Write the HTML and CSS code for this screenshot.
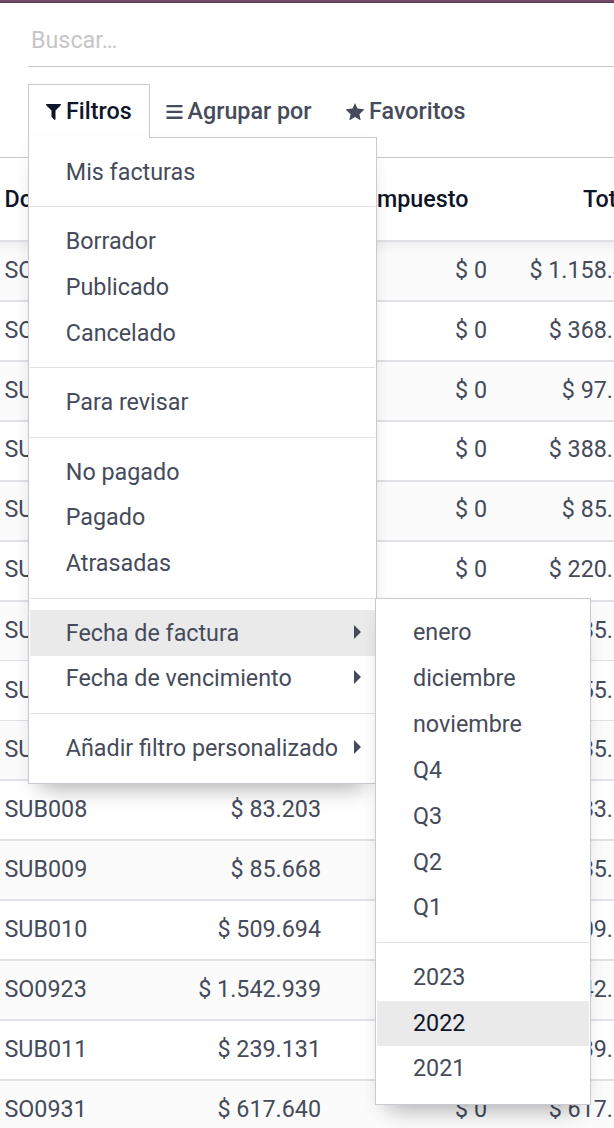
FILE: index.html
```html
<!DOCTYPE html>
<html lang="es">
<head>
<meta charset="utf-8">
<title>Facturas</title>
<link rel="stylesheet" href="styles.css">
</head>
<body>
<div class="app">
  <div class="navbar"></div>
  <header class="control-panel">
    <div class="search">Buscar…</div>
    <nav class="toolbar">
      <div class="tool tool-open">
        <svg class="icon icon-filter" viewBox="0 0 15 16"><path d="M.7 0h13.6c.6 0 .9.7.5 1.200L9.500 6.500v8.600c0 .7-.7 1-1.200.6L5.800 13.200c-.2-.2-.3-.4-.3-.6V6.500L.2 1.200C-.2.700.1 0 .7 0z"/></svg>
        <span>Filtros</span>
        <div class="menu filter-menu">
          <div class="item">Mis facturas</div>
          <div class="divider"></div>
          <div class="item">Borrador</div>
          <div class="item">Publicado</div>
          <div class="item">Cancelado</div>
          <div class="divider"></div>
          <div class="item">Para revisar</div>
          <div class="divider"></div>
          <div class="item">No pagado</div>
          <div class="item">Pagado</div>
          <div class="item">Atrasadas</div>
          <div class="divider"></div>
          <div class="item item-parent item-hover">Fecha de factura</div>
          <div class="item item-parent">Fecha de vencimiento</div>
          <div class="divider"></div>
          <div class="item item-parent">Añadir filtro personalizado</div>
          <div class="menu date-menu">
            <div class="item">enero</div>
            <div class="item">diciembre</div>
            <div class="item">noviembre</div>
            <div class="item">Q4</div>
            <div class="item">Q3</div>
            <div class="item">Q2</div>
            <div class="item">Q1</div>
            <div class="divider"></div>
            <div class="item">2023</div>
            <div class="item item-hover item-focus">2022</div>
            <div class="item">2021</div>
          </div>
        </div>
      </div>
      <div class="tool tool-group">
        <svg class="icon icon-bars" viewBox="0 0 17 14"><path d="M.5 0h16v2.300H.5zM.5 5.800h16v2.300H.5zM.5 11.600h16v2.300H.5z"/></svg>
        <span>Agrupar por</span>
      </div>
      <div class="tool tool-favorites">
        <svg class="icon icon-star" viewBox="0 0 18 17"><path d="M9 0l2.500 5.600 6.200.7c.4.1.5.4.2.7l-4.500 4.200 1.200 5.500c.1.400-.2.600-.5.400L9 14.100l-5.100 3c-.3.200-.6 0-.5-.4l1.200-5.500L.1 7c-.3-.3-.2-.6.2-.7l6.200-.7z"/></svg>
        <span>Favoritos</span>
      </div>
    </nav>
  </header>
  <main class="list">
    <div class="row head"><span>Do</span><span></span><span class="tax-head">Impuesto</span><span class="total-head">Tot</span></div>
    <div class="row odd first"><span>SO</span><span></span><span>$ 0</span><span class="total-long">$ 1.158.4</span></div>
    <div class="row"><span>SO</span><span></span><span>$ 0</span><span>$ 368.</span></div>
    <div class="row odd"><span>SU</span><span></span><span>$ 0</span><span>$ 97.</span></div>
    <div class="row"><span>SU</span><span></span><span>$ 0</span><span>$ 388.</span></div>
    <div class="row odd"><span>SU</span><span></span><span>$ 0</span><span>$ 85.</span></div>
    <div class="row"><span>SU</span><span></span><span>$ 0</span><span>$ 220.</span></div>
    <div class="row odd thin"><span>SU</span><span></span><span></span><span>$ 85.</span></div>
    <div class="row thin"><span>SU</span><span></span><span></span><span>$ 55.</span></div>
    <div class="row odd"><span>SU</span><span></span><span></span><span>$ 85.</span></div>
    <div class="row"><span>SUB008</span><span>$ 83.203</span><span></span><span>$ 83.</span></div>
    <div class="row odd"><span>SUB009</span><span>$ 85.668</span><span></span><span>$ 85.</span></div>
    <div class="row"><span>SUB010</span><span>$ 509.694</span><span></span><span>$ 509.</span></div>
    <div class="row odd"><span>SO0923</span><span>$ 1.542.939</span><span></span><span>$ 1.542.</span></div>
    <div class="row"><span>SUB011</span><span>$ 239.131</span><span></span><span>$ 239.</span></div>
    <div class="row odd"><span>SO0931</span><span>$ 617.640</span><span>$ 0</span><span>$ 617.</span></div>
  </main>
</div>
</body>
</html>
```
FILE: styles.css
```css
* { box-sizing: border-box; }
body {
  margin: 0;
  background: #fff;
  color: #454b5a;
  font: 400 23.3px/30px Roboto, sans-serif;
}
.app { width: 614px; height: 1128px; overflow: hidden; }
.navbar { height: 3px; background: #714b67; border-bottom: 1px solid #5a3c52; }
.control-panel { height: 155px; padding-left: 28px; border-bottom: 1px solid #c9c9d1; }
.search {
  height: 64px;
  padding: 22px 3px 0;
  border-bottom: 1px solid #c9c9d1;
  color: #c6c6c8;
}
.toolbar { display: flex; padding-top: 17px; }
.tool {
  display: flex;
  align-items: center;
  height: 54px;
  font-weight: 500;
  white-space: nowrap;
}
.tool-open {
  position: relative;
  width: 122px;
  padding: 0 0 1px 17px;
  border: 1px solid #c9c9d1;
  border-bottom: 0;
  color: #0f1528;
}
.tool-group { padding-left: 15.500px; }
.tool-favorites { padding-left: 34px; }
.icon { flex: none; fill: currentColor; }
.icon-filter { width: 15px; height: 16px; margin: 2px 5px 0 0; }
.icon-bars { width: 17px; height: 14px; margin: 2px 5px 0 0; }
.icon-star { width: 18px; height: 17px; margin: 1px 5.500px 0 0; }

.menu {
  position: absolute;
  padding: 11.4px 1px;
  border: 1px solid #c9c9d1;
  background: #fff;
  box-shadow: 0 18px 22px -14px rgba(0, 0, 0, .3), 0 4px 16px rgba(0, 0, 0, .035);
  color: #454b5a;
  font-weight: 400;
}
.filter-menu { z-index: 1; top: 52px; left: -1px; width: 349px; height: 647px; }
.filter-menu::before {
  content: "";
  position: absolute;
  top: -1px;
  left: 0;
  width: 120px;
  height: 1px;
  background: #fff;
}
.date-menu { top: 460px; left: 346px; width: 216px; height: 507px; }
.item { height: 45.83px; padding: 7.55px 35.800px; white-space: nowrap; }
.date-menu .item { padding: 7.1px 36px; }
.divider { height: 1px; margin: 11.25px 0; background: #dfe0e4; }
.item-hover { background: #eaeaea; }
.item-focus { color: #0f1528; }
.item-parent { display: flex; align-items: flex-start; justify-content: space-between; padding-right: 14px; }
.item-parent::after {
  content: "";
  width: 0;
  height: 0;
  margin-top: 7px;
  border: 7px solid transparent;
  border-left-color: #454b5a;
  border-right-width: 0;
}

.row {
  display: grid;
  grid-template-columns: 121px 200px 166px 126px;
  align-items: center;
  height: 59.93px;
  padding-bottom: 2.5px;
  border-bottom: 2px solid #e0e0e6;
  white-space: nowrap;
}
.row span { text-align: right; }
.row span:first-child { padding-left: 4.500px; text-align: left; }
.head { height: 84px; padding-bottom: 0; color: #0f1528; font-weight: 500; }
.row .tax-head { padding-right: 18.500px; }
.row .total-head { padding-left: 96px; text-align: left; }
.row .total-long { margin-right: -13px; }
.odd { background: #fbfbfb; }
.first { background: linear-gradient(#f0f0f0, #fbfbfb 12px); }
.thin { border-bottom-width: 1px; }
```
